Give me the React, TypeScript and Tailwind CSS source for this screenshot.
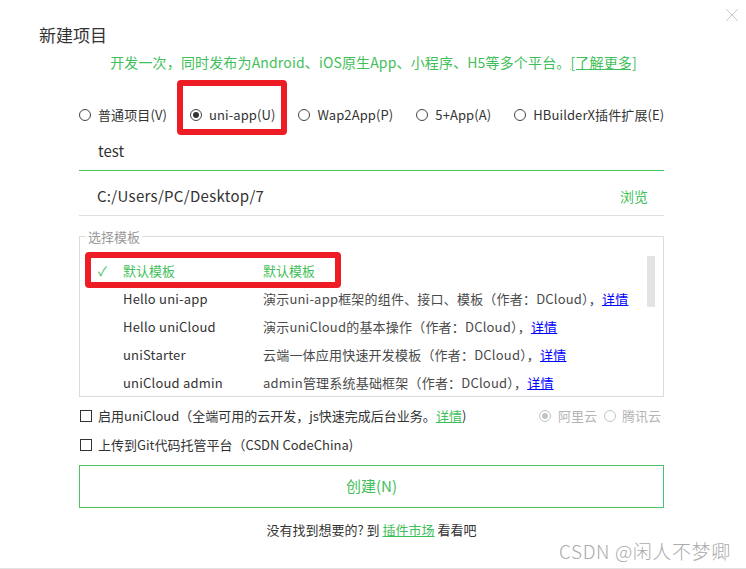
import React from 'react';

const GREEN = 'text-[#3fbf5a]';

const Radio: React.FC<{ checked?: boolean; muted?: boolean }> = ({ checked, muted }) => (
  <span
    className={`relative inline-flex w-[12px] h-[12px] rounded-full border shrink-0 items-center justify-center ${
      muted ? 'border-[#c4c4c4]' : 'border-[#444]'
    }`}
  >
    {checked && (
      <span className={`w-[6px] h-[6px] rounded-full ${muted ? 'bg-[#c4c4c4]' : 'bg-[#333]'}`} />
    )}
  </span>
);

const templates = [
  { name: 'Hello uni-app', desc: '演示uni-app框架的组件、接口、模板（作者：DCloud），' },
  { name: 'Hello uniCloud', desc: '演示uniCloud的基本操作（作者：DCloud），' },
  { name: 'uniStarter', desc: '云端一体应用快速开发模板（作者：DCloud），' },
  { name: 'uniCloud admin', desc: 'admin管理系统基础框架（作者：DCloud），' },
];

const projectTypes = [
  { label: '普通项目(V)', checked: false },
  { label: 'uni-app(U)', checked: true },
  { label: 'Wap2App(P)', checked: false },
  { label: '5+App(A)', checked: false },
  { label: 'HBuilderX插件扩展(E)', checked: false },
];

export default function App() {
  return (
    <div className="relative w-[746px] h-[569px] bg-white overflow-hidden border-b border-[#e2e2e2] font-['Noto_Sans_CJK_SC',sans-serif] text-[#333]">
      {/* close */}
      <svg className="absolute left-[725px] top-[8px]" width="14" height="14" viewBox="0 0 14 14">
        <path d="M1 1L13 13M13 1L1 13" stroke="#c9c9c9" strokeWidth="1" fill="none" />
      </svg>

      <div className="pl-[39px] pt-[23px] text-[17px] leading-[24px] text-[#333]">新建项目</div>

      <div className="pl-[79px] pr-[82px]">
        <div className={`mt-[5px] h-[20px] leading-[20px] text-[14px] text-center tracking-[0.15px] pl-[4px] ${GREEN}`}>
          开发一次，同时发布为Android、iOS原生App、小程序、H5等多个平台。<span className="underline">[了解更多]</span>
        </div>

        <div className="relative mt-[29px] h-[28px] flex items-center gap-[23px] text-[13px] tracking-[0.1px]">
          {projectTypes.map((t) => (
            <label key={t.label} className="flex items-center gap-[7px] whitespace-nowrap">
              <Radio checked={t.checked} />
              <span>{t.label}</span>
            </label>
          ))}
          <div className="absolute left-[98px] top-[-21px] w-[110px] h-[55px] border-[6px] border-[#ee1c25] rounded-[4px]" />
        </div>

        <div className="mt-[3px] h-[39px] flex items-center pl-[19px] border-b border-[#43c35e] text-[15px]">test</div>

        <div className="mt-[7px] h-[38px] flex items-center justify-between pl-[18px] pr-[16px] border-b border-[#e0e0e0]">
          <span className="text-[15px] tracking-[0.3px]">C:/Users/PC/Desktop/7</span>
          <span className={`text-[14px] ${GREEN}`}>浏览</span>
        </div>

        <div className="relative mt-[20px] h-[161px] border border-[#dcdcdc] overflow-hidden">
          <div className="pt-[20px]">
            <div className={`h-[28px] flex items-center text-[13px] ${GREEN}`}>
              <span className="w-[43px] pl-[18px]">✓</span>
              <span className="w-[140px]">默认模板</span>
              <span>默认模板</span>
            </div>
            {templates.map((t) => (
              <div key={t.name} className="h-[28px] flex items-center text-[13px] whitespace-nowrap tracking-[0.2px]">
                <span className="w-[43px]" />
                <span className="w-[140px] text-[#333]">{t.name}</span>
                <span className="text-[#4a4a4a]">
                  {t.desc}
                  <span className="text-[#0000ff] underline">详情</span>
                </span>
              </div>
            ))}
          </div>
          <div className="absolute right-[8px] top-[19px] w-[8px] h-[51px] bg-[#e3e3e3]" />
        </div>
        <div className="absolute left-[85px] top-[252px] w-[256px] h-[36px] border-[6px] border-[#ee1c25] rounded-[4px]" />
        <div className="absolute left-[86px] top-[229px] bg-white px-[2px] text-[13px] leading-[16px] text-[#999]">选择模板</div>

        <div className="mt-[4px] h-[29px] flex items-center justify-between text-[13px]">
          <div className="flex items-center gap-[6px] pl-[1px]">
            <span className="w-[12px] h-[12px] border border-[#333]" />
            <span>
              启用uniCloud（全端可用的云开发，js快速完成后台业务。<span className={`underline ${GREEN}`}>详情</span>)
            </span>
          </div>
          <div className="flex items-center text-[#b4b4b4]">
            <Radio checked muted />
            <span className="ml-[7px] mr-[7px]">阿里云</span>
            <Radio muted />
            <span className="ml-[6px] mr-[3px]">腾讯云</span>
          </div>
        </div>
        <div className="h-[29px] flex items-center gap-[6px] pl-[1px] text-[13px]">
          <span className="w-[12px] h-[12px] border border-[#333]" />
          <span>上传到Git代码托管平台（CSDN CodeChina)</span>
        </div>

        <div className={`mt-[6px] h-[43px] border border-[#4cc264] flex items-center justify-center text-[15px] ${GREEN}`}>
          创建(N)
        </div>

        <div className="mt-[12px] h-[20px] leading-[20px] text-center text-[13px]">
          没有找到想要的? 到 <span className={`underline ${GREEN}`}>插件市场</span> 看看吧
        </div>
      </div>

      <div className="absolute left-[559px] top-[538px] text-[19px] leading-[26px] tracking-[0.6px] text-[#ababab] font-light whitespace-nowrap">
        CSDN @闲人不梦卿
      </div>
    </div>
  );
}
